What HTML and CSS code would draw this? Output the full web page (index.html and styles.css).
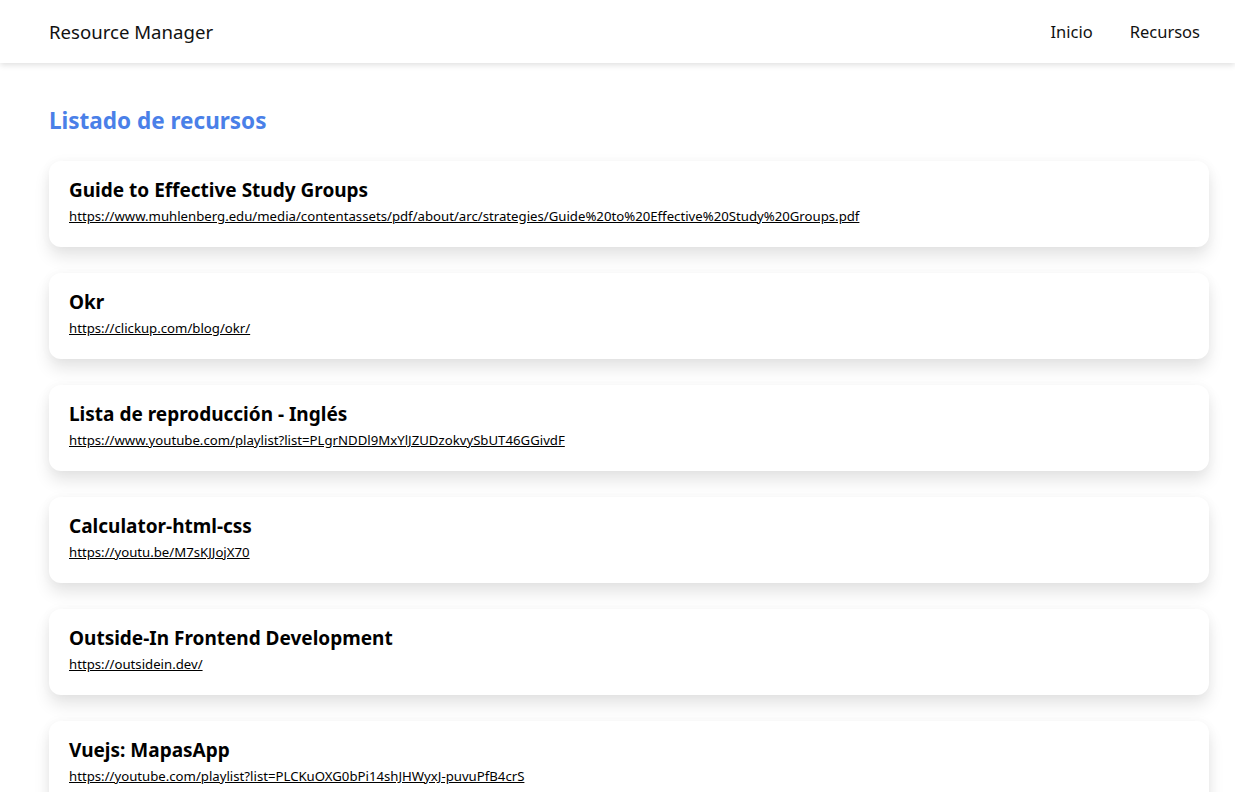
FILE: index.html
```html
<!DOCTYPE html>
<html lang="es">
<head>
<meta charset="utf-8">
<title>Resource Manager</title>
<link rel="stylesheet" href="styles.css">
</head>
<body>
<header class="topbar">
  <a class="brand" href="#">Resource Manager</a>
  <nav class="nav">
    <a href="#">Inicio</a>
    <a href="#">Recursos</a>
  </nav>
</header>
<main class="content">
  <h1 class="page-title">Listado de recursos</h1>
  <ul class="list">
    <li class="card">
      <h2 class="card-title">Guide to Effective Study Groups</h2>
      <a class="card-link" href="#">https://www.muhlenberg.edu/media/contentassets/pdf/about/arc/strategies/Guide%20to%20Effective%20Study%20Groups.pdf</a>
    </li>
    <li class="card">
      <h2 class="card-title">Okr</h2>
      <a class="card-link" href="#">https://clickup.com/blog/okr/</a>
    </li>
    <li class="card">
      <h2 class="card-title">Lista de reproducción - Inglés</h2>
      <a class="card-link" href="#">https://www.youtube.com/playlist?list=PLgrNDDl9MxYlJZUDzokvySbUT46GGivdF</a>
    </li>
    <li class="card">
      <h2 class="card-title">Calculator-html-css</h2>
      <a class="card-link" href="#">https://youtu.be/M7sKJJojX70</a>
    </li>
    <li class="card">
      <h2 class="card-title">Outside-In Frontend Development</h2>
      <a class="card-link" href="#">https://outsidein.dev/</a>
    </li>
    <li class="card">
      <h2 class="card-title">Vuejs: MapasApp</h2>
      <a class="card-link" href="#">https://youtube.com/playlist?list=PLCKuOXG0bPi14shJHWyxJ-puvuPfB4crS</a>
    </li>
  </ul>
</main>
</body>
</html>
```
FILE: styles.css
```css
* { box-sizing: border-box; }
html, body { margin: 0; padding: 0; }
body {
  font-family: "Noto Sans", "Open Sans", sans-serif;
  color: #000;
  background: #fff;
  overflow: hidden;
}
.topbar {
  height: 63px;
  display: flex;
  align-items: center;
  justify-content: space-between;
  padding: 0 35px 0 49px;
  background: #fff;
  box-shadow: 0 2px 6px rgba(0,0,0,0.13);
  position: relative;
  z-index: 1;
}
.brand {
  font-size: 18.6px;
  color: #111;
  text-decoration: none;
}
.nav { display: flex; gap: 37px; }
.nav a {
  font-size: 16.5px;
  color: #111;
  text-decoration: none;
}
.content {
  padding: 40px 26px 0 49px;
}
.page-title {
  margin: 0 0 22px;
  font-size: 22.5px;
  font-weight: 700;
  color: #4a80e8;
  line-height: 36px;
}
.list {
  list-style: none;
  margin: 0;
  padding: 0;
  display: flex;
  flex-direction: column;
  gap: 26px;
}
.card {
  height: 86px;
  padding: 16px 20px;
  background: #fff;
  border-radius: 12px;
  box-shadow: 0 10px 16px rgba(0,0,0,0.1), 0 0 12px rgba(0,0,0,0.035);
}
.card-title {
  margin: 0;
  font-size: 19px;
  font-weight: 700;
  line-height: 26px;
}
.card-link {
  display: inline-block;
  margin-top: 1px;
  font-size: 13.2px;
  color: #000;
  text-decoration: underline;
  line-height: 24px;
}
```
